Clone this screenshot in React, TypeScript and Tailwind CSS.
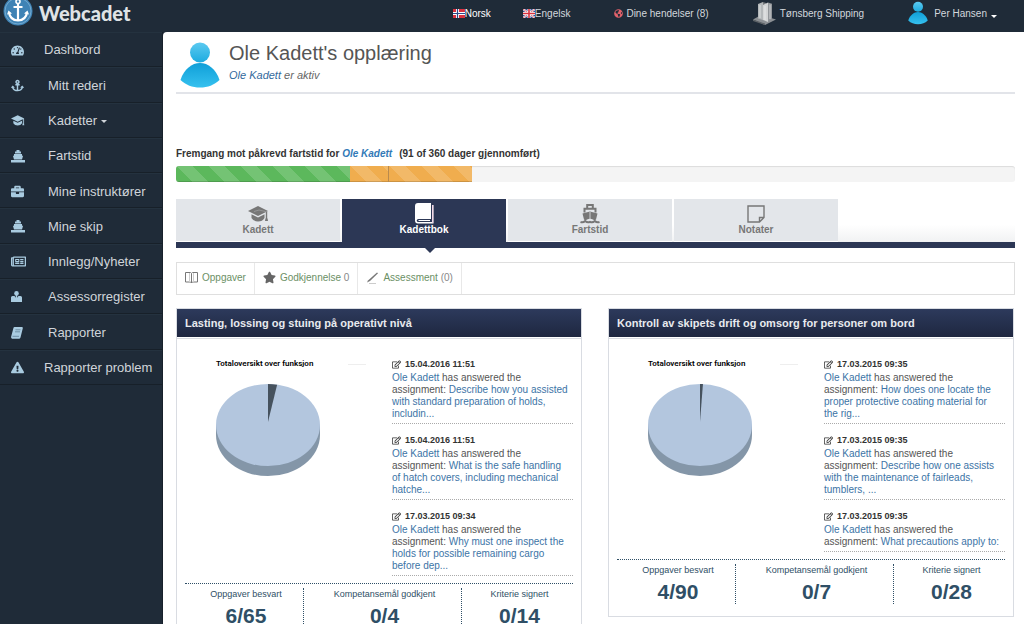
import type { ReactNode } from "react";
import {
  FaAnchor,
  FaBriefcase,
  FaExclamationTriangle,
  FaGlobeAmericas,
  FaRegEdit,
  FaRegNewspaper,
  FaStar,
  FaTachometerAlt,
} from "react-icons/fa";

type NavItem = { label: string; icon: ReactNode; wide?: boolean; caret?: boolean };
type Entry = { date: string; task: string };
type Unit = { title: string; share: number; entries: Entry[]; stats: string[] };

function PersonIcon({ id, className }: { id: string; className: string }) {
  return (
    <svg viewBox="0 0 40 46" className={className} aria-hidden="true">
      <defs>
        <linearGradient id={`${id}-head`} x1="0" y1="0" x2="0" y2="1">
          <stop offset="0" stopColor="#5cc9f0" />
          <stop offset="1" stopColor="#1cace0" />
        </linearGradient>
        <linearGradient id={`${id}-body`} x1="0" y1="0" x2="0" y2="1">
          <stop offset="0" stopColor="#0f9fd8" />
          <stop offset="1" stopColor="#36c1ef" />
        </linearGradient>
      </defs>
      <circle cx="20" cy="10.5" r="10" fill={`url(#${id}-head)`} />
      <path
        d="M20 21C12 21 4 27 .5 38C6 43 12 45.500 20 45.500S34 43 39.500 38C36 27 28 21 20 21Z"
        fill={`url(#${id}-body)`}
      />
    </svg>
  );
}

function CapIcon({ className }: { className: string }) {
  return (
    <svg viewBox="0 0 21 16" className={className} aria-hidden="true">
      <path d="M0 5 10 0l10 5-10 5z" fill="currentColor" />
      <path d="M6 5.500 11 4l8.300 2v7" fill="none" stroke="#e3e6ea" strokeOpacity=".35" strokeWidth=".8" />
      <path d="m3.500 8.300 6.500 3.200 6.500-3.200v3.700q-2 3.500-6.500 3.500T3.500 12z" fill="currentColor" />
      <path d="M18.500 5.500v8" stroke="currentColor" strokeWidth="1.400" />
      <path d="M17.500 12.500h2l.5 2.500h-3z" fill="currentColor" />
    </svg>
  );
}

function ShipOnQuayIcon() {
  return (
    <svg viewBox="0 0 14 13" className="h-[13px] w-3.5" fill="currentColor" aria-hidden="true">
      <path d="M5.500 0h3v1.500h1.500v2H4v-2h1.500zM3 4h8v1.500l1 .5-1 3.500H3L2 6l1-.5z" />
      <path d="M0 10h14v2.500H0z" />
    </svg>
  );
}

function AssessorIcon() {
  return (
    <svg viewBox="0 0 11 12" className="h-3 w-[11px]" fill="currentColor" aria-hidden="true">
      <circle cx="5.5" cy="2.4" r="2.300" />
      <path d="M0 6.500Q0 5 1.500 5h2L5.500 7.500 7.500 5h2Q11 5 11 6.500V11H0z" />
      <path d="M5.500 4v5" stroke="#a9cbe0" strokeWidth="1.400" />
    </svg>
  );
}

function ReportIcon() {
  return (
    <svg viewBox="0 0 12 12" className="size-3" fill="currentColor" aria-hidden="true">
      <path d="M3.500 0h7.500q1 .3.800 1.300L9.500 10.500q-.4 1.200-1.500 1.200H1Q-.3 11 .2 9.500L2.500.8Q2.800 0 3.500 0z" />
      <path d="M4.500 2.800h5M4 4.800h5M1.500 9.300h6.500" stroke="#5f7f95" strokeWidth=".8" />
    </svg>
  );
}

function BookIcon() {
  return (
    <svg viewBox="0 0 19 21" className="h-[21px] w-[19px]" aria-hidden="true">
      <path d="M3 0h13v16H3.500q-1.800 0-1.800 1.500T3.500 19H17V2h1.500v18.500H3Q0 20.500 0 17.500V3Q0 0 3 0z" fill="#fff" />
      <path d="M17.800 2v18" stroke="#e7b9d3" strokeWidth=".8" />
      <path d="M3.500 17.500H15" stroke="#fff" />
    </svg>
  );
}

function ShipIcon() {
  return (
    <svg viewBox="0 0 20 20" className="size-5" fill="none" stroke="currentColor" aria-hidden="true">
      <path d="M7.200 4V1h5.600v3M4.500 8.500V4.800h11v3.700" strokeWidth="2" />
      <path d="M2.500 9.500 10 7.500l7.500 2-1.500 6q-1.500 1-3 0-3-1.500-6 0-1.500 1-3 0z" fill="currentColor" stroke="none" />
      <path d="M10 8v7" stroke="#e3e6ea" strokeWidth=".8" />
      <path d="M.5 18q2.500 1 4.700-1 2.300 2 4.800.800 2.500 1.200 4.800-.8 2.200 2 4.700 1" strokeWidth="2" />
    </svg>
  );
}

function NoteIcon() {
  return (
    <svg viewBox="0 0 18 18" className="size-[18px]" fill="none" stroke="currentColor" strokeWidth="1.400" aria-hidden="true">
      <path d="M1 1h16v11.500L12.500 17H1zM12.500 17v-4.500H17" />
    </svg>
  );
}

function OpenBookIcon() {
  return (
    <svg viewBox="0 0 13 13" className="size-[13px]" fill="none" stroke="#777" aria-hidden="true">
      <path d="M.5 1.500h5l1 .8 1-.8h5v9.500h-5l-1 1-1-1h-5zM6.500 2.500V12" />
      <path d="M4.500 2v9M8.500 2v9" stroke="#ccc" />
    </svg>
  );
}

function PenIcon() {
  return (
    <svg viewBox="0 0 13 13" className="size-[13px]" aria-hidden="true">
      <path d="M1 11.500 2 9.500l9-8 1 .8L4 10z" fill="#777" />
      <path d="M3 12.500h7" stroke="#ccc" />
    </svg>
  );
}

function NorwayFlag() {
  return (
    <svg viewBox="0 0 12 9" className="h-[9px] w-3" aria-hidden="true">
      <path fill="#d8323f" d="M0 0h12v9H0z" />
      <path stroke="#fff" strokeWidth="3" d="M4.500 0v9M0 4.500h12" />
      <path stroke="#2b4a8a" strokeWidth="1.200" d="M4.500 0v9M0 4.500h12" />
    </svg>
  );
}

function BritainFlag() {
  return (
    <svg viewBox="0 0 12 9" className="h-[9px] w-3" aria-hidden="true">
      <path fill="#39508f" d="M0 0h12v9H0z" />
      <path stroke="#fff" strokeWidth="2" d="M0 0l12 9M12 0 0 9" />
      <path stroke="#d8323f" strokeWidth=".7" d="M0 0l12 9M12 0 0 9" />
      <path stroke="#fff" strokeWidth="3" d="M6 0v9M0 4.500h12" />
      <path stroke="#d8323f" strokeWidth="1.600" d="M6 0v9M0 4.500h12" />
    </svg>
  );
}

function BuildingIcon() {
  return (
    <svg viewBox="0 0 24 24" className="size-6" aria-hidden="true">
      <path d="M0 18.500 8 14l15 4.500L12 24z" fill="#8b8f93" />
      <path d="M0 18.500 12 22.500V24L0 20z" fill="#5d6267" />
      <path d="m5 3 5-2v18l-5-1.500z" fill="#b4b8ba" />
      <path d="m10 1 3 1v18l-3-1z" fill="#75797d" />
      <path d="m10 4 5-2.500V21l-5-2z" fill="#d3d5d6" />
      <path d="m15 1.500 4 1.300V18l-4 3z" fill="#92969a" />
      <path d="M7 4v13M12 5v14M17 3.500V18" stroke="#eef0f1" strokeWidth=".7" />
    </svg>
  );
}

function Logo() {
  return (
    <svg viewBox="0 0 30 30" className="size-[30px]" aria-hidden="true">
      <circle cx="15" cy="15" r="14.500" fill="#3f83b5" />
      <circle cx="15" cy="15" r="13" fill="none" stroke="#74aad0" />
      <g fill="none" stroke="#fff" strokeWidth="2.200">
        <circle cx="15" cy="5.500" r="2" strokeWidth="1.600" />
        <path d="M15 8v16M10.500 11h9M6 16.500q1 7.500 9 8 8-.5 9-8" />
      </g>
      <path d="m4 18.500 1.500-4 3.500 3zM26 18.500l-1.500-4-3.500 3z" fill="#fff" />
    </svg>
  );
}

function Caret() {
  return <span className="inline-block border-x-[3px] border-t-[3px] border-x-transparent border-t-current" />;
}

const navItems: NavItem[] = [
  { label: "Dashbord", icon: <FaTachometerAlt />, wide: true },
  { label: "Mitt rederi", icon: <FaAnchor /> },
  { label: "Kadetter", icon: <CapIcon className="h-[11px] w-3.5" />, caret: true },
  { label: "Fartstid", icon: <ShipOnQuayIcon /> },
  { label: "Mine instruktører", icon: <FaBriefcase /> },
  { label: "Mine skip", icon: <ShipOnQuayIcon /> },
  { label: "Innlegg/Nyheter", icon: <FaRegNewspaper className="size-[15px]" /> },
  { label: "Assessorregister", icon: <AssessorIcon /> },
  { label: "Rapporter", icon: <ReportIcon /> },
  { label: "Rapporter problem", icon: <FaExclamationTriangle />, wide: true },
];

const tabs = [
  { label: "Kadett", icon: <CapIcon className="h-4 w-[21px]" /> },
  { label: "Kadettbok", icon: <BookIcon />, active: true },
  { label: "Fartstid", icon: <ShipIcon /> },
  { label: "Notater", icon: <NoteIcon /> },
];

const statLabels = ["Oppgaver besvart", "Kompetansemål godkjent", "Kriterie signert"];

const units: Unit[] = [
  {
    title: "Lasting, lossing og stuing på operativt nivå",
    share: 0.028,
    entries: [
      { date: "15.04.2016 11:51", task: "Describe how you assisted with standard preparation of holds, includin..." },
      { date: "15.04.2016 11:51", task: "What is the safe handling of hatch covers, including mechanical hatche..." },
      { date: "17.03.2015 09:34", task: "Why must one inspect the holds for possible remaining cargo before dep..." },
    ],
    stats: ["6/65", "0/4", "0/14"],
  },
  {
    title: "Kontroll av skipets drift og omsorg for personer om bord",
    share: 0.009,
    entries: [
      { date: "17.03.2015 09:35", task: "How does one locate the proper protective coating material for the rig..." },
      { date: "17.03.2015 09:35", task: "Describe how one assists with the maintenance of fairleads, tumblers, ..." },
      { date: "17.03.2015 09:35", task: "What precautions apply to:" },
    ],
    stats: ["4/90", "0/7", "0/28"],
  },
];

function Header() {
  return (
    <header className="flex h-8 items-center pr-[27px] text-[10px] text-[#d3d8dd]">
      <a href="#" className="flex items-center gap-1.5 pb-2.5 pl-[3px]">
        <Logo />
        <span className="pt-1 font-[Lato,sans-serif] text-xl leading-6 font-black text-[#dfe3e6]">Webcadet</span>
      </a>
      <nav className="ml-auto flex items-center pb-1.5">
        <a href="#" className="flex items-center text-white">
          <NorwayFlag />
          Norsk
        </a>
        <a href="#" className="ml-8 flex items-center">
          <BritainFlag />
          Engelsk
        </a>
        <a href="#" className="ml-11 flex items-center gap-[3px]">
          <FaGlobeAmericas className="size-[9px] text-[#e0616a]" />
          Dine hendelser (8)
        </a>
        <a href="#" className="ml-11 flex items-center gap-[3px]">
          <BuildingIcon />
          Tønsberg Shipping
        </a>
        <button type="button" className="ml-11 flex items-center gap-1.5">
          <PersonIcon id="user" className="h-6 w-5" />
          Per Hansen
          <span className="-ml-0.5 flex pt-1.5 text-white">
            <Caret />
          </span>
        </button>
      </nav>
    </header>
  );
}

function Sidebar() {
  return (
    <nav className="w-[163px] shrink-0 border-r border-[#17212b]">
      <ul className="grid h-[353px] auto-rows-fr">
        {navItems.map((item) => (
          <li key={item.label} className="border-t border-b border-t-[#24323f] border-b-[#172029]">
            <a href="#" className="flex h-full items-center pt-px pl-[11px] text-[13px] text-[#d0d5da]">
              <span className={`shrink-0 text-[13px] text-[#a9cbe0] ${item.wide ? "w-[33px]" : "w-[37px]"}`}>
                {item.icon}
              </span>
              {item.label}
              {item.caret && (
                <span className="ml-1 flex pt-0.5">
                  <Caret />
                </span>
              )}
            </a>
          </li>
        ))}
      </ul>
    </nav>
  );
}

const stripes =
  "bg-[linear-gradient(45deg,rgba(255,255,255,.15)_25%,transparent_25%,transparent_50%,rgba(255,255,255,.15)_50%,rgba(255,255,255,.15)_75%,transparent_75%,transparent)] bg-[length:32px_32px]";

function SeaTime() {
  return (
    <section>
      <p className="text-[10px] leading-4 font-bold text-[#333]">
        Fremgang mot påkrevd fartstid for{" "}
        <a href="#" className="text-[#337ab7] italic">
          Ole Kadett
        </a>
        <span className="ml-[7px]">(91 of 360 dager gjennomført)</span>
      </p>
      <div className="mt-1 flex h-4 overflow-hidden rounded-[3px] bg-[#f4f4f4] shadow-[inset_0_1px_1px_rgba(0,0,0,.1)]">
        <div className={`w-[20.7%] bg-[#5cb85c] shadow-[inset_0_-1px_0_rgba(0,0,0,.15)] ${stripes}`} />
        <div className={`w-[4.7%] border-r border-[#b98a4d] bg-[#f0ad4e] shadow-[inset_0_-1px_0_rgba(0,0,0,.15)] ${stripes}`} />
        <div className={`w-[9.9%] bg-[#f0ad4e] shadow-[inset_0_-1px_0_rgba(0,0,0,.15)] ${stripes}`} />
      </div>
    </section>
  );
}

function Tabs() {
  return (
    <div className="mt-[17px] flex gap-0.5 border-b-[6px] border-[#2c3755] bg-linear-to-b from-white from-60% to-[#f1f2f3]">
      {tabs.map((tab) => (
        <button
          key={tab.label}
          type="button"
          className={`relative flex h-[43px] w-[164px] flex-col items-center border-b pt-1 text-[10px] leading-3 font-bold ${
            tab.active ? "border-[#2c3755] bg-[#2c3755] text-white" : "border-white bg-[#e3e6ea] text-[#777]"
          }`}
        >
          <span className="flex h-[21px] items-center">{tab.icon}</span>
          {tab.label}
          {tab.active && (
            <span className="absolute top-12 left-1/2 border-x-[6px] border-t-[6px] border-x-transparent border-t-[#2c3755]" />
          )}
        </button>
      ))}
    </div>
  );
}

function SubMenu() {
  const item = "flex items-center gap-1 border-r border-[#e8e8e8] px-2 pb-0.5 text-[#6b9065]";
  return (
    <nav className="mt-3.5 flex h-[33px] border border-[#dfdfdf] text-[10px]">
      <a href="#" className={item}>
        <OpenBookIcon />
        Oppgaver
      </a>
      <a href="#" className={item}>
        <FaStar className="size-[13px] text-[#666]" />
        <span>
          Godkjennelse <span className="text-[#888]">0</span>
        </span>
      </a>
      <a href="#" className={item}>
        <PenIcon />
        <span>
          Assessment <span className="text-[#888]">(0)</span>
        </span>
      </a>
    </nav>
  );
}

function Pie({ share }: { share: number }) {
  const angle = share * 2 * Math.PI;
  const x = 52 + 52 * Math.sin(angle);
  const y = 41 - 41 * Math.cos(angle);
  return (
    <svg viewBox="0 0 104 93" className="h-[93px] w-[104px]" role="img" aria-label="Totaloversikt over funksjon">
      <path d="M0 41v10a52 41 0 0 0 104 0V41z" fill="#8496a8" />
      <ellipse cx="52" cy="41" rx="52" ry="41" fill="#b3c6de" />
      <path d={`M52 38V0A52 41 0 0 1 ${x} ${y}Z`} fill="#46525e" />
    </svg>
  );
}

function UnitCard({ unit }: { unit: Unit }) {
  return (
    <section className="flex-1 border border-[#d9dce2]">
      <h2 className="bg-linear-to-b from-[#2d3a5c] to-[#1e2740] px-2 text-[11px] leading-7 font-bold text-[#e8eaee]">
        {unit.title}
      </h2>
      <div className="mt-px border-t border-[#d9dce2] px-2 pb-3">
        <div className="flex pt-[19px]">
          <div className="flex w-[207px] items-start">
            <div className="ml-[31px] flex w-[104px] flex-col">
              <p className="font-[Roboto,sans-serif] text-[8px] leading-3 font-semibold whitespace-nowrap text-black">
                Totaloversikt over funksjon
              </p>
              <div className="mt-3.5">
                <Pie share={unit.share} />
              </div>
            </div>
            <span className="mt-1.5 ml-7 h-px w-[18px] bg-[#eee]" />
          </div>
          <ul className="flex flex-1 flex-col gap-2.5">
            {unit.entries.map((entry, i) => (
              <li key={i} className="border-b border-dotted border-[#aaa] pr-1 pb-[3px] text-[10px] leading-3 text-[#555]">
                <p className="mb-0.5 flex items-center gap-1 text-[9px] font-bold text-[#333]">
                  <FaRegEdit className="size-[9px]" />
                  {entry.date}
                </p>
                <p>
                  <a href="#" className="text-[#3c74a6]">
                    Ole Kadett
                  </a>{" "}
                  has answered the
                  <br />
                  assignment:{" "}
                  <a href="#" className="text-[#3c74a6]">
                    {entry.task}
                  </a>
                </p>
              </li>
            ))}
          </ul>
        </div>
        <dl className="mt-[7px] grid grid-cols-[119fr_158fr_111fr] border-t border-dotted border-[#2f4f66] pt-1 text-center text-[#2f4f66]">
          {statLabels.map((label, i) => (
            <div key={label} className="h-10 border-r border-dotted border-[#2f4f66] pl-1 last:border-r-0">
              <dt className="text-[9px] leading-3">{label}</dt>
              <dd className="pt-1 text-[21px] leading-6 font-bold">{unit.stats[i]}</dd>
            </div>
          ))}
        </dl>
      </div>
    </section>
  );
}

export default function App() {
  return (
    <div className="flex min-h-screen flex-col bg-[#1f2b38] font-['Liberation_Sans',Arial,sans-serif]">
      <Header />
      <div className="flex flex-1">
        <Sidebar />
        <main className="min-w-0 flex-1 rounded-tl bg-white pr-[9px] pl-[13px]">
          <div className="flex h-[62px] border-b-2 border-[#e2e4e9] pt-2.5 pl-1">
            <PersonIcon id="cadet" className="h-[46px] w-10" />
            <div className="pl-[9px]">
              <h1 className="text-xl leading-[22px] text-[#555]">Ole Kadett's opplæring</h1>
              <p className="mt-[3px] text-[11px] leading-4 text-[#666] italic">
                <a href="#" className="text-[#33699c]">
                  Ole Kadett
                </a>{" "}
                er aktiv
              </p>
            </div>
          </div>
          <div className="pt-13">
            <SeaTime />
          </div>
          <Tabs />
          <SubMenu />
          <div className="mt-[13px] flex items-start gap-[26px] pr-px pb-6">
            {units.map((unit) => (
              <UnitCard key={unit.title} unit={unit} />
            ))}
          </div>
        </main>
      </div>
    </div>
  );
}
